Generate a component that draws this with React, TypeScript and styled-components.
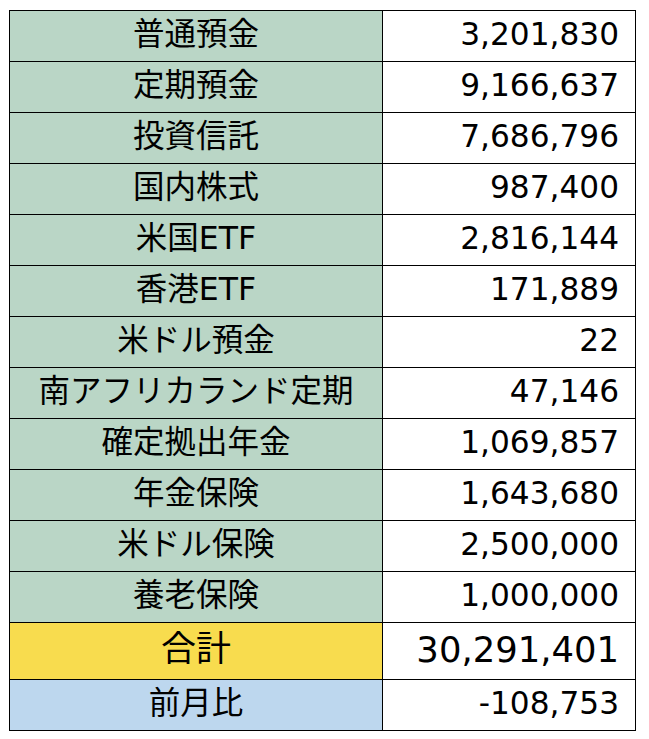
import React from "react";
import styled, { createGlobalStyle } from "styled-components";

const Global = createGlobalStyle`
  html, body { margin: 0; padding: 0; background: #ffffff; }
  body { font-family: "DejaVu Sans", "Noto Sans CJK JP", sans-serif; color: #000; }
`;

const Page = styled.div`
  padding: 10px 0 0 9px;
`;

const Table = styled.div`
  display: grid;
  grid-template-columns: 372px 252px;
  grid-template-rows: repeat(12, 50px) 56px 50px;
  gap: 1px;
  padding: 1px;
  background: #000;
  width: max-content;
`;

type Tone = "green" | "yellow" | "blue";
const tones: Record<Tone, string> = {
  green: "#BAD6C6",
  yellow: "#F8DC4E",
  blue: "#BDD7EE",
};

const Label = styled.div<{ $tone: Tone; $big?: boolean }>`
  background: ${(p) => tones[p.$tone]};
  display: flex;
  align-items: center;
  justify-content: center;
  font-size: ${(p) => (p.$big ? "35px" : "31.5px")};
  line-height: 1;
  padding-bottom: 3px;
  box-sizing: border-box;
  white-space: nowrap;
`;

const Value = styled.div<{ $big?: boolean }>`
  background: #fff;
  display: flex;
  align-items: center;
  justify-content: flex-end;
  padding-right: 16px;
  padding-bottom: 3px;
  box-sizing: border-box;
  font-size: ${(p) => (p.$big ? "35.4px" : "31.2px")};
  line-height: 1;
  white-space: nowrap;
`;

const rows: [string, string][] = [
  ["普通預金", "3,201,830"],
  ["定期預金", "9,166,637"],
  ["投資信託", "7,686,796"],
  ["国内株式", "987,400"],
  ["米国ETF", "2,816,144"],
  ["香港ETF", "171,889"],
  ["米ドル預金", "22"],
  ["南アフリカランド定期", "47,146"],
  ["確定拠出年金", "1,069,857"],
  ["年金保険", "1,643,680"],
  ["米ドル保険", "2,500,000"],
  ["養老保険", "1,000,000"],
];

export default function App() {
  return (
    <>
      <Global />
      <Page>
        <Table>
          {rows.map(([k, v]) => (
            <React.Fragment key={k}>
              <Label $tone="green">{k}</Label>
              <Value>{v}</Value>
            </React.Fragment>
          ))}
          <Label $tone="yellow" $big>合計</Label>
          <Value $big>30,291,401</Value>
          <Label $tone="blue">前月比</Label>
          <Value>-108,753</Value>
        </Table>
      </Page>
    </>
  );
}
